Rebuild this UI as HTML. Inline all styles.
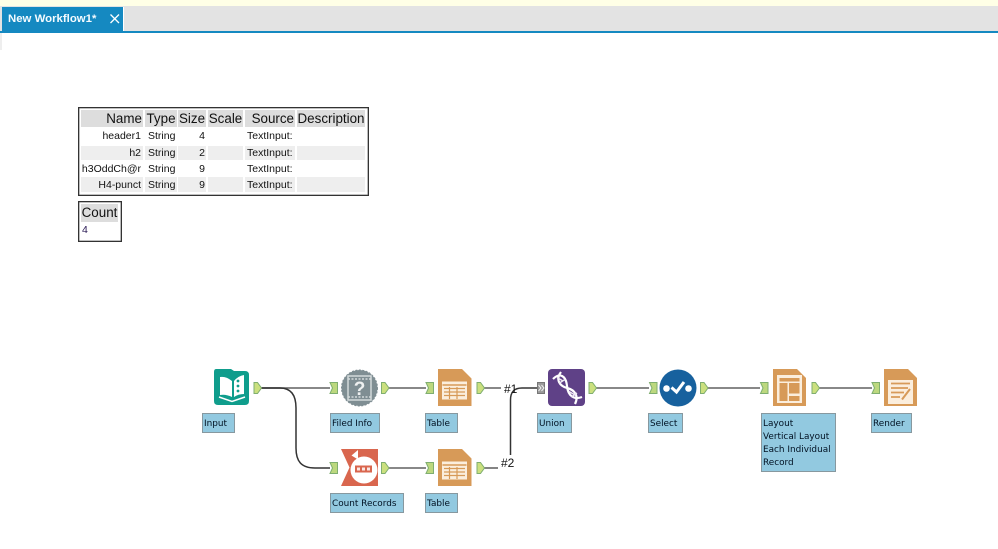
<!DOCTYPE html>
<html><head><meta charset="utf-8"><style>
html,body{margin:0;padding:0;background:#fff}
body{position:relative;width:998px;height:549px;overflow:hidden;font-family:"Liberation Sans",sans-serif;filter:blur(.3px)}
.a{position:absolute}
.c{position:absolute;box-sizing:border-box;white-space:nowrap;overflow:hidden}
.h{background:#ddd;color:#111;font-size:13.4px;line-height:17px;top:110px;height:17px;text-align:right;padding-right:1px}
.d{font-size:10.5px;color:#111;text-align:right}
.l{position:absolute;box-sizing:border-box;background:#92c9e0;border:1.5px solid #87989f;font:8.9px/13px "DejaVu Sans",sans-serif;color:#012;padding:4px 0 0 1px;white-space:nowrap}
</style></head><body>
<div class="a" style="left:0;top:0;width:998px;height:6px;background:#ffffe6"></div>
<div class="a" style="left:0;top:6px;width:998px;height:25px;background:#e3e3e3"></div>
<div class="a" style="left:2px;top:7px;width:121px;height:24px;background:#1589c1;color:#f4fbff;font-weight:bold;font-size:11.4px;line-height:25px;padding-left:6px;box-sizing:border-box">New Workflow1*</div>
<div class="a" style="left:123px;top:7px;width:1px;height:24px;background:#fff"></div>
<svg class="a" style="left:109px;top:13px" width="12" height="12"><path d="M1.5 1.500L10 10M10 1.500L1.500 10" stroke="#fff" stroke-width="1.300" fill="none"/></svg>
<div class="a" style="left:0;top:31px;width:998px;height:2px;background:#1589c1"></div>
<div class="a" style="left:0;top:33px;width:2px;height:17px;background:#eee"></div>

<div class="a" style="left:78px;top:107px;width:291px;height:89px;box-sizing:border-box;border:1.6px solid #333;box-shadow:inset 0 0 0 .4px #555"></div>
<div class="c h" style="left:81px;width:62px">Name</div>
<div class="c h" style="left:145px;width:32px;text-align:center;padding:0">Type</div>
<div class="c h" style="left:178px;width:28px;text-align:center;padding:0">Size</div>
<div class="c h" style="left:208px;width:35px;text-align:center;padding:0">Scale</div>
<div class="c h" style="left:245px;width:50px">Source</div>
<div class="c h" style="left:297px;width:68px;text-align:center;padding:0">Description</div>

<div class="c" style="left:81px;top:146px;width:62px;height:14px;background:#eee"></div>
<div class="c" style="left:145px;top:146px;width:32px;height:14px;background:#eee"></div>
<div class="c" style="left:178px;top:146px;width:28px;height:14px;background:#eee"></div>
<div class="c" style="left:208px;top:146px;width:35px;height:14px;background:#eee"></div>
<div class="c" style="left:245px;top:146px;width:50px;height:14px;background:#eee"></div>
<div class="c" style="left:297px;top:146px;width:68px;height:14px;background:#eee"></div>
<div class="c" style="left:81px;top:177px;width:62px;height:15px;background:#eee"></div>
<div class="c" style="left:145px;top:177px;width:32px;height:15px;background:#eee"></div>
<div class="c" style="left:178px;top:177px;width:28px;height:15px;background:#eee"></div>
<div class="c" style="left:208px;top:177px;width:35px;height:15px;background:#eee"></div>
<div class="c" style="left:245px;top:177px;width:50px;height:15px;background:#eee"></div>
<div class="c" style="left:297px;top:177px;width:68px;height:15px;background:#eee"></div>

<div class="c d" style="left:81px;top:129px;width:60px;line-height:14px">header1</div>
<div class="c d" style="left:148px;top:129px;width:29px;line-height:14px;text-align:left">String</div>
<div class="c d" style="left:178px;top:129px;width:27px;line-height:14px">4</div>
<div class="c d" style="left:247px;top:129px;width:48px;line-height:14px;text-align:left">TextInput:</div>
<div class="c d" style="left:81px;top:146px;width:60px;line-height:14px">h2</div>
<div class="c d" style="left:148px;top:146px;width:29px;line-height:14px;text-align:left">String</div>
<div class="c d" style="left:178px;top:146px;width:27px;line-height:14px">2</div>
<div class="c d" style="left:247px;top:146px;width:48px;line-height:14px;text-align:left">TextInput:</div>
<div class="c d" style="left:81px;top:162px;width:60px;line-height:14px">h3OddCh@r</div>
<div class="c d" style="left:148px;top:162px;width:29px;line-height:14px;text-align:left">String</div>
<div class="c d" style="left:178px;top:162px;width:27px;line-height:14px">9</div>
<div class="c d" style="left:247px;top:162px;width:48px;line-height:14px;text-align:left">TextInput:</div>
<div class="c d" style="left:81px;top:178px;width:60px;line-height:14px">H4-punct</div>
<div class="c d" style="left:148px;top:178px;width:29px;line-height:14px;text-align:left">String</div>
<div class="c d" style="left:178px;top:178px;width:27px;line-height:14px">9</div>
<div class="c d" style="left:247px;top:178px;width:48px;line-height:14px;text-align:left">TextInput:</div>

<div class="a" style="left:78px;top:201px;width:44px;height:41px;box-sizing:border-box;border:1.6px solid #333;box-shadow:inset 0 0 0 .4px #555"></div>
<div class="c" style="left:81px;top:204px;width:37px;height:18px;background:#ddd;font-size:13.4px;line-height:17px;color:#111;text-align:center">Count</div>
<div class="c" style="left:82px;top:223px;font-size:10.5px;line-height:14px;color:#2a1a55">4</div>

<svg class="a" style="left:0;top:0" width="998" height="549" viewBox="0 0 998 549">
<defs>
<g id="o"><path d="M0 -5.500H3.500L7.500 0L3.500 5.500H0Z" fill="#cbe07e" stroke="#7fae70" stroke-width="1"/></g>
<g id="i"><path d="M0 -5.500H7.500V5.500H0L2.500 0Z" fill="#bcd87e" stroke="#7fae70" stroke-width="1"/></g>
<g id="t"><path d="M0 0H24L33.500 9.500V37H0Z" fill="#d79a58"/><rect x="4" y="12.500" width="25" height="18" fill="#fbeedd"/><path d="M4.500 16H28.500" stroke="#d79a58" stroke-width="1.600"/><path d="M6 19.500H27M6 23H27M6 26.500H27M11.500 18V30M19 18V30" stroke="#d79a58" stroke-width="1.200"/></g>
</defs>

<g fill="none" stroke="#777" stroke-width="1.800">
<path d="M261 388H330"/><path d="M389 388H426"/><path d="M484 388H501"/><path d="M596 388H649"/><path d="M707 388H760"/><path d="M819 388H872"/>
<path d="M389 468H426"/><path d="M484 468H498"/>
</g>
<g fill="none" stroke="#333" stroke-width="1.500">
<path d="M261 388H280C291 388 296 395 296 408V448C296 461 301 468 315 468H330"/>
<path d="M510.500 455V400C510.500 392 514 388 522 388H537"/>
</g>
<text x="504" y="393" font-family="Liberation Sans" font-size="12" fill="#111">#1</text>
<text x="501" y="467" font-family="Liberation Sans" font-size="12" fill="#111">#2</text>

<use href="#o" x="254" y="388"/><use href="#i" x="330" y="388"/>
<use href="#o" x="381.500" y="388"/><use href="#i" x="426" y="388"/>
<use href="#o" x="477" y="388"/>
<use href="#o" x="589" y="388"/><use href="#i" x="649.500" y="388"/>
<use href="#o" x="700.500" y="388"/><use href="#i" x="760.500" y="388"/>
<use href="#o" x="812" y="388"/><use href="#i" x="872" y="388"/>
<use href="#i" x="330" y="468"/><use href="#o" x="381.500" y="468"/>
<use href="#i" x="426" y="468"/><use href="#o" x="477" y="468"/>
<path d="M537.500 382.500H544.500V393.500H537.500Z" fill="#999" stroke="#777"/>
<path d="M538.500 385L541 388L538.500 391M541.500 385L544 388L541.500 391" stroke="#eee" fill="none"/>

<!-- Input -->
<path d="M216 369H231L234 371H245Q249 371 249 375V401Q249 405 245 405H218Q214 405 214 401V372Q214 369 216 369Z" fill="#0f9d8c"/>
<path d="M220 377Q226 376 232 381V397Q226 394 220 395Z" fill="#fff"/>
<path d="M234 381Q238 376 244 375V394Q238 394 234 397Z" fill="#fff"/>
<path d="M219 397L232 401.500L245 397" fill="none" stroke="#fff" stroke-width="1.500"/>
<g fill="#0f9d8c"><circle cx="238" cy="381" r="1.400"/><circle cx="238" cy="386" r="1.400"/><circle cx="238" cy="391" r="1.400"/></g>

<!-- Field info -->
<circle cx="359.500" cy="388" r="18" fill="#7f8e93" stroke="#7f8e93" stroke-width="1" stroke-dasharray="2 1.500"/>
<rect x="348" y="376" width="23" height="24" fill="none" stroke="#d4dadb" stroke-width="1.500"/>
<path d="M348 379H371M348 397H371" stroke="#d4dadb" stroke-width="1.500" stroke-dasharray="2 1.500"/>
<text x="359.500" y="395" font-family="Liberation Sans" font-size="19" font-weight="bold" fill="#eef0f0" text-anchor="middle">?</text>

<!-- Count -->
<path d="M341 449H378V486H341L349.500 467.500Z" fill="#d9664e"/>
<circle cx="364" cy="470" r="13.500" fill="#fff"/>
<path d="M351.500 455.500L358 450V459.500Z" fill="#fff"/>
<rect x="355" y="465.500" width="17" height="7" fill="#d9664e"/>
<g fill="#fff" opacity=".85"><rect x="357" y="467.500" width="3" height="3"/><rect x="362" y="467.500" width="3" height="3"/><rect x="367" y="467.500" width="3" height="3"/></g>

<use href="#t" x="438" y="369"/>
<use href="#t" x="438" y="449"/>

<!-- Union -->
<rect x="548" y="369" width="37" height="37" rx="4" fill="#5f4187"/>
<g fill="none" stroke="#fff" stroke-width="2.200">
<path d="M553 379C560 372 566 376 567 386C568 396 574 400 582 397"/>
<path d="M561 372C555 380 560 386 567 388C575 390 579 396 575 404"/>
</g>
<g stroke="#efe9f5" stroke-width="1.400"><path d="M557 377.500L563 381M559.500 383L565 379.500M569 391.500L575 395M571.500 397L577 393"/></g>

<!-- Select -->
<circle cx="678" cy="388" r="18.500" fill="#17619e"/>
<circle cx="666.500" cy="388.500" r="3.300" fill="#fff"/>
<circle cx="688.500" cy="388.500" r="3.300" fill="#fff"/>
<path d="M671.500 387.500L676.500 392L684 382" fill="none" stroke="#fff" stroke-width="3"/>

<!-- Layout -->
<path d="M773 369H797L806 378V406H773Z" fill="#d79a58"/>
<rect x="777" y="375" width="25" height="28" fill="#fbeedd"/>
<g fill="#d79a58"><rect x="779.500" y="378" width="20" height="3.500"/><rect x="779.500" y="383" width="8" height="18"/><rect x="789" y="383" width="10.500" height="10.500"/><rect x="789" y="396" width="10.500" height="5"/></g>

<!-- Render -->
<path d="M884 369H908L917 378V406H884Z" fill="#d79a58"/>
<rect x="888" y="380" width="25" height="24" fill="#fbeedd"/>
<path d="M891 383.500H910M891 388H908M891 392.500H904M891 397H900" stroke="#d79a58" stroke-width="1.800"/>
<path d="M902 399.500L910 389" stroke="#d79a58" stroke-width="2"/>
</svg>

<div class="l" style="left:202px;top:413px;width:33px;height:20px">Input</div>
<div class="l" style="left:330px;top:413px;width:50px;height:20px">Filed Info</div>
<div class="l" style="left:330px;top:493px;width:74px;height:20px">Count Records</div>
<div class="l" style="left:425px;top:413px;width:33px;height:20px">Table</div>
<div class="l" style="left:425px;top:493px;width:33px;height:20px">Table</div>
<div class="l" style="left:537px;top:413px;width:35px;height:20px">Union</div>
<div class="l" style="left:648px;top:413px;width:35px;height:20px">Select</div>
<div class="l" style="left:761px;top:413px;width:75px;height:59px">Layout<br>Vertical Layout<br>Each Individual<br>Record</div>
<div class="l" style="left:871px;top:413px;width:41px;height:20px">Render</div>
</body></html>
